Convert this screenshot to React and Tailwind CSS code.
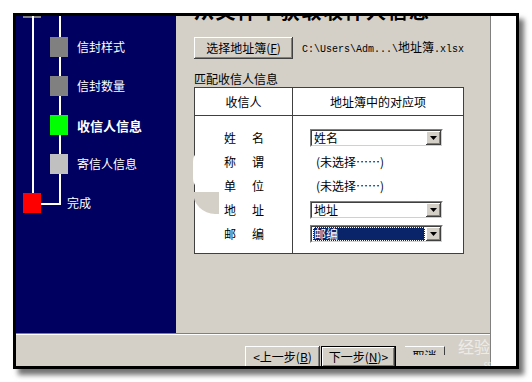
import React from 'react';

const cjk = "font-['Noto_Sans_CJK_SC','Liberation_Sans',sans-serif]";
const raised =
  'shadow-[inset_-1px_-1px_#404040,inset_1px_1px_#ffffff,inset_-2px_-2px_#808080,inset_2px_2px_#d4d0c8]';

const steps = [
  { label: '信封样式', color: 'bg-[#808080]' },
  { label: '信封数量', color: 'bg-[#808080]' },
  { label: '收信人信息', color: 'bg-[#00ff00]', bold: true },
  { label: '寄信人信息', color: 'bg-[#c0c0c0]' },
];

const rows = [
  { a: '姓', b: '名', combo: '姓名' },
  { a: '称', b: '谓', text: '(未选择……)' },
  { a: '单', b: '位', text: '(未选择……)' },
  { a: '地', b: '址', combo: '地址' },
  { a: '邮', b: '编', combo: '邮编', selected: true },
];

function Arrow() {
  return (
    <svg width="7" height="4" viewBox="0 0 7 4">
      <path d="M0 0h7L3.5 4z" fill="#000" />
    </svg>
  );
}

function Combo({ value, selected }) {
  return (
    <div className="flex h-[18px] w-[133px] border border-t-[#808080] border-l-[#808080] border-b-white border-r-white">
      <div className="flex flex-1 border border-t-[#404040] border-l-[#404040] border-b-[#d4d0c8] border-r-[#d4d0c8] bg-white">
        <div className="flex flex-1 items-center pl-[1px] pr-[1px]">
          {selected ? (
            <div className="flex h-[14px] flex-1 items-center bg-[#0a246a] pl-[1px] text-white outline-1 outline-dotted outline-offset-[-1px] outline-[#fff]">
              {value}
            </div>
          ) : (
            <span className="pl-[1px]">{value}</span>
          )}
        </div>
        <div className={`flex w-[15px] items-center justify-center bg-[#d4d0c8] ${raised}`}>
          <Arrow />
        </div>
      </div>
    </div>
  );
}

export default function App() {
  return (
    <div className={`relative h-[382px] w-[532px] overflow-hidden bg-white text-[12px] leading-none text-black ${cjk}`}>
      <div className="absolute left-[13px] top-[13px] flex h-[356px] w-[506px] border-[3px] border-black shadow-[5px_6px_5px_rgba(0,0,0,0.55)]">
        {/* dialog */}
        <div className="flex w-[475px] flex-col border-r border-[#808080] bg-[#d4d0c8]">
          <div className="flex h-[317px]">
            {/* steps panel */}
            <div className="relative w-[160px] bg-[#000060] text-white">
              <div className="absolute left-[7px] top-0 h-[2px] w-[18px] bg-[#808080]" />
              <div className="absolute left-[16px] top-0 h-[177px] w-[2px] bg-white" />
              <div className="absolute left-[43px] top-0 h-[189px] w-[2px] bg-white" />
              <div className="absolute left-[25px] top-[187px] h-[2px] w-[20px] bg-white" />
              <div className="relative flex flex-col gap-[19px] pl-[34px] pt-[21px]">
                {steps.map((s) => (
                  <div key={s.label} className="flex h-[20px] items-center gap-[9px]">
                    <div className={`h-[20px] w-[18px] ${s.color}`} />
                    <span className={s.bold ? 'text-[13px] font-bold' : ''}>{s.label}</span>
                  </div>
                ))}
              </div>
              <div className="relative mt-[19px] flex h-[20px] items-center pl-[7px]">
                <div className="h-[20px] w-[18px] bg-[#ff0000]" />
                <span className="ml-[26px]">完成</span>
              </div>
            </div>

            {/* content */}
            <div className="flex flex-1 flex-col pl-[18px]">
              <div className="h-[6px] overflow-hidden">
                <div className="mt-[-15px] text-[20px] font-bold leading-[20px] tracking-[1.5px]">
                  从文件中获取收件人信息
                </div>
              </div>
              <div className="mt-[15px] flex h-[22px] items-center">
                <div className={`flex h-[22px] w-[99px] items-center justify-center ${raised}`}>
                  选择地址簿(<span className="underline">F</span>)
                </div>
                <span className="ml-[9px] font-['Liberation_Mono',monospace] text-[10px]">
                  C:\Users\Adm...\<span className={`${cjk} text-[12px]`}>地址簿</span>.xlsx
                </span>
              </div>
              <div className="mt-[14px] h-[12px]">匹配收信人信息</div>
              <div className="relative mt-[2px] w-[270px] border border-[#404040] bg-white">
                <div className="grid h-[28px] grid-cols-[98px_1fr] border-b border-[#404040]">
                  <div className="flex items-center justify-center border-r border-[#404040]">收信人</div>
                  <div className="flex items-center justify-center">地址簿中的对应项</div>
                </div>
                <div className="grid grid-cols-[98px_1fr]">
                  <div className="border-r border-[#404040] pb-[7px] pt-[10px]">
                    {rows.map((r) => (
                      <div key={r.a} className="flex h-[24px] items-center gap-[16px] pl-[29px]">
                        <span>{r.a}</span>
                        <span>{r.b}</span>
                      </div>
                    ))}
                  </div>
                  <div className="pb-[7px] pt-[10px]">
                    {rows.map((r) => (
                      <div key={r.a} className="flex h-[24px] items-center pl-[17px]">
                        {r.combo ? (
                          <Combo value={r.combo} selected={r.selected} />
                        ) : (
                          <span className="pl-[6px]">{r.text}</span>
                        )}
                      </div>
                    ))}
                  </div>
                </div>
                {/* cursor artifact */}
                <div className="absolute left-[-2px] top-[60px] h-[44px] w-[14px] rounded-l-full bg-white" />
                <div className="absolute left-[-2px] top-[104px] h-[22px] w-[26px] rounded-bl-[22px] bg-[#d4d0c8]" />
              </div>
            </div>
          </div>

          {/* button bar */}
          <div className="h-px bg-[#808080]" />
          <div className="h-px bg-white" />
          <div className="flex flex-1 items-start overflow-hidden pl-[229px] pt-[11px]">
            <div className={`flex h-[22px] w-[75px] items-center justify-center ${raised}`}>
              &lt;上一步(<span className="underline">B</span>)
            </div>
            <div className="ml-[1px] h-[22px] w-[75px] border border-black">
              <div className={`flex h-full items-center justify-center ${raised}`}>
                下一步(<span className="underline">N</span>)&gt;
              </div>
            </div>
            <div className="ml-[9px] h-[9px] w-[40px] overflow-hidden border-r border-t border-r-[#404040] border-t-white">
              <div className="mt-[3px] text-center">取消</div>
            </div>
          </div>
        </div>
        <div className="flex-1 bg-white" />
      </div>

      {/* watermark */}
      <div className="absolute left-[458px] top-[337px] text-[16px] leading-[18px] text-white/60">经验</div>
      <div className="absolute left-[484px] top-[360px] text-[7px] leading-[7px] text-white/70">com</div>
    </div>
  );
}
